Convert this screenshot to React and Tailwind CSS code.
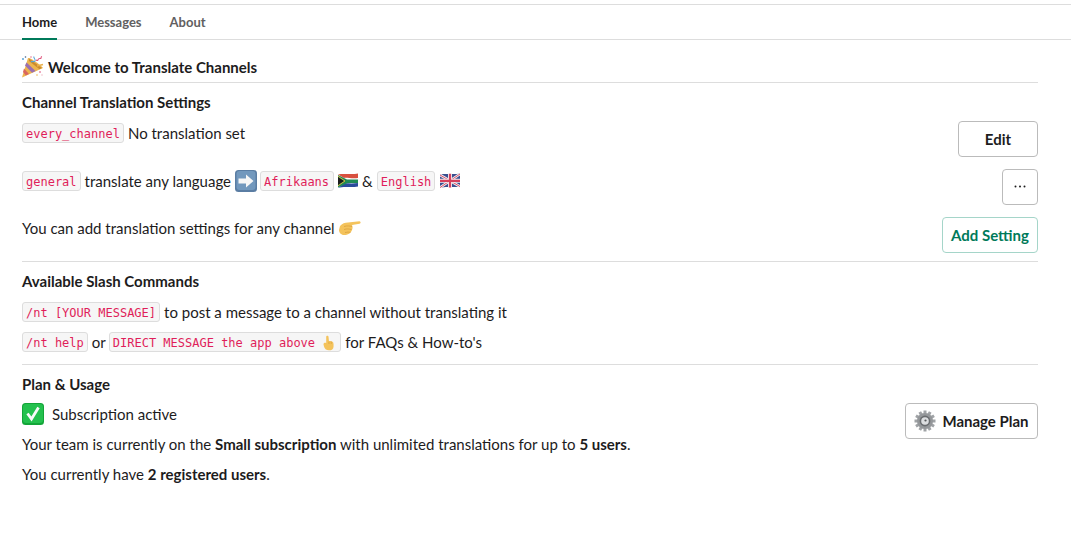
import React from "react";

const Code = ({ className = "", children }) => (
  <code className={`inline-flex items-center h-[20px] px-[3px] pt-px border border-[#dddddd] rounded-[3px] bg-[#f6f6f6] text-[#e01e5a] text-[12px] font-['DejaVu_Sans_Mono',monospace] ${className}`}>
    {children}
  </code>
);

const Party = () => (
  <svg width="22" height="22" viewBox="0 0 22 22" className="shrink-0">
    <path d="M6 2 C8 1 20 10 21 12 L0 21.5 Z" fill="#edb54e" />
    <path d="M4.5 6.5 L13.5 15 L10 16.7 L3 9.5 Z" fill="#9a6fb0" />
    <path d="M2 12.5 L7 18 L3.8 19.6 L1 16 Z" fill="#d9675f" />
    <path d="M7 2.5 L20 12 L17.5 13.2 L7 5 Z" fill="#c98a2e" />
    <path d="M9 6 C11 4 12 7 13 5 C14 3 11 2 12 0.5" stroke="#5aa5d8" strokeWidth="1.1" fill="none" />
    <path d="M14 4 C17 6 15 2 18 2.5 C20 3 18 1 20 0.5" stroke="#e0567e" strokeWidth="1.1" fill="none" />
    <path d="M15 10 L21 8.5" stroke="#e8b04a" strokeWidth="1.4" />
    <circle cx="1" cy="3" r="1" fill="#5aa5d8" />
    <circle cx="3.5" cy="1" r="0.8" fill="#3c5f8a" />
    <circle cx="18" cy="16" r="1" fill="#e88ca8" />
    <circle cx="20" cy="19" r="0.8" fill="#f0c0c8" />
    <circle cx="15" cy="19" r="0.8" fill="#edb54e" />
    <circle cx="9" cy="1" r="0.7" fill="#e0567e" />
  </svg>
);

const ArrowRight = () => (
  <svg width="22" height="22" viewBox="0 0 22 22" className="shrink-0">
    <rect x="0" y="0" width="22" height="22" rx="3.5" fill="#5a7da3" />
    <rect x="1.5" y="1" width="19" height="19" rx="3" fill="#7298bd" />
    <path d="M3.5 8.5 H11 V4.5 L18.5 11 L11 17.5 V13.5 H3.5 Z" fill="#f6f6f6" />
  </svg>
);

const FlagZA = () => (
  <svg width="20" height="15" viewBox="0 0 20 15" className="shrink-0 mb-[2px]">
    <path d="M0 1.5 C6 0 13 2 20 0.5 V13.5 C13 15 6 13 0 15 Z" fill="#fff" />
    <path d="M0 1.5 C6 0 13 2 20 0.5 V5 C14 6 8 4 6 5 Z" fill="#d8503f" />
    <path d="M0 15 C6 13 13 15 20 13.5 V10 C14 11 8 10 6 10.5 Z" fill="#2a4b9b" />
    <path d="M0 2 L9 6.5 H20 V10 H9.5 L0 14.5 Z" fill="#1f8a55" />
    <path d="M0 4 L6 8 L0 12 Z" fill="#1b1b1b" />
    <path d="M0 3.2 L7 8 L0 12.8" stroke="#e8b83a" strokeWidth="0.9" fill="none" />
  </svg>
);

const FlagUK = () => (
  <svg width="20" height="15" viewBox="0 0 20 15" className="shrink-0 mb-[2px] ml-[1px]">
    <path d="M0 1.5 C6 0 13 2 20 0.5 V13.5 C13 15 6 13 0 15 Z" fill="#3b4f8f" />
    <path d="M0 2 L20 13.5 M20 1 L0 14.5" stroke="#f2eef0" strokeWidth="2.6" />
    <path d="M0 2 L20 13.5 M20 1 L0 14.5" stroke="#d8506a" strokeWidth="1" />
    <path d="M10 0.8 V14.5 M0 7.8 H20" stroke="#f2eef0" strokeWidth="4" />
    <path d="M10 0.8 V14.5 M0 7.8 H20" stroke="#d63f5c" strokeWidth="2.2" />
  </svg>
);

const PointRight = () => (
  <svg width="22" height="16" viewBox="0 0 22 16" className="shrink-0">
    <path d="M1 6 C3 3.5 6 2.5 9 2.5 L20.5 1.2 C22 1.2 22 3.6 20.5 3.8 L13 5 C14 7 13.5 9 13 10 C12 13 9 15 5 15 C2 15 0 12.5 0 10 Z" fill="#f4c35c" />
    <path d="M5 6.5 C8 5.5 11 6 13 6.5 M5 9.5 C8 8.5 10 9 12.5 9.5 M6 12.5 C8 12 10 12 11.5 12.3" stroke="#d9a03c" strokeWidth="0.8" fill="none" />
  </svg>
);

const PointUp = () => (
  <svg width="11" height="16" viewBox="0 0 12 16" className="shrink-0 ml-[1px] mr-[3px]">
    <path d="M3.5 1.2 C3.5 -0.3 6 -0.3 6 1.2 L6.5 6 C9 5.5 11.5 6.5 11.5 9 V12 C11.5 14.5 9.5 16 6.5 16 C3.5 16 1.5 14 1 11.5 L0.5 9 C1 7.5 2.5 7.5 3.5 8 Z" fill="#f4c35c" />
    <path d="M6.5 6.5 V9 M9 6.5 V9" stroke="#d9a03c" strokeWidth="0.8" />
  </svg>
);

const CheckBox = () => (
  <svg width="22" height="22" viewBox="0 0 22 22" className="shrink-0">
    <rect width="22" height="22" rx="3.5" fill="#13a538" />
    <rect x="1" y="1" width="20" height="19" rx="3" fill="#24c14e" />
    <path d="M5.5 10.5 L9.5 16 L16.5 4.5" stroke="#fafafa" strokeWidth="2.8" fill="none" />
  </svg>
);

const teeth = [0, 30, 60, 90, 120, 150, 180, 210, 240, 270, 300, 330];

const Gear = () => (
  <svg width="22" height="22" viewBox="0 0 22 22" className="shrink-0">
    {teeth.map((a) => (
      <rect key={a} x="9.5" y="0.5" width="3" height="5" fill="#a0a3a6" transform={`rotate(${a} 11 11)`} />
    ))}
    <circle cx="11" cy="11" r="8" fill="#94979a" />
    <circle cx="11" cy="11" r="5.4" fill="#6a6d70" />
    <circle cx="11" cy="11" r="3.8" fill="#dcdee0" />
    <circle cx="11.5" cy="10.5" r="1.1" fill="#55585b" />
  </svg>
);

const Button = ({ className, children }) => (
  <button className={`h-[36px] shrink-0 rounded-[4px] border bg-white text-[15px] font-bold flex items-center justify-center ${className}`}>
    {children}
  </button>
);

const Divider = ({ className }) => <div className={`h-px bg-[#dddddd] ${className}`} />;

const Heading = ({ className, children }) => (
  <h2 className={`text-[15px] leading-[20px] font-bold text-[#1d1c1d] ${className}`}>{children}</h2>
);

const Line = ({ className, children }) => (
  <div className={`flex items-center h-[22px] text-[15px] text-[#1d1c1d] whitespace-pre ${className}`}>{children}</div>
);

export default function App() {
  return (
    <div className="w-[1071px] h-[542px] bg-white overflow-hidden pt-[4px] font-['Lato',sans-serif]">
      <div className="h-[34px] border-t border-b border-[#dddddd] box-content flex gap-[28px] px-[22px] text-[13px] font-bold text-[#616061]">
        <div className="h-[35px] pt-[3px] flex items-center text-[#1d1c1d] border-b-2 border-[#007a5a]">Home</div>
        <div className="h-[35px] pt-[3px] flex items-center border-b-2 border-transparent">Messages</div>
        <div className="h-[35px] pt-[3px] flex items-center border-b-2 border-transparent">About</div>
      </div>

      <div className="w-[1016px] ml-[22px]">
        <div className="flex items-center gap-[4px] h-[22px] mt-[16px] text-[15px] font-bold text-[#1d1c1d]">
          <Party />
          Welcome to Translate Channels
        </div>
        <Divider className="mt-[4px]" />

        <Heading className="mt-[9px]">Channel Translation Settings</Heading>

        <div className="flex justify-between mt-[10px]">
          <Line className="gap-[4px]">
            <Code>every_channel</Code>No translation set
          </Line>
          <Button className="w-[80px] mt-[-1px] border-[#bbbbbb] text-[#1d1c1d]">Edit</Button>
        </div>

        <div className="flex justify-between mt-[12px]">
          <Line className="gap-[4px] mt-[1px]">
            <Code>general</Code>translate any language
            <ArrowRight />
            <Code className="ml-[-1px] pr-[4px]">Afrikaans</Code>
            <FlagZA />
            <span>&amp;</span>
            <Code>English</Code>
            <FlagUK />
          </Line>
          <Button className="w-[36px] border-[#bbbbbb] text-[#1d1c1d]">
            <svg width="12" height="3" viewBox="0 0 12 3" className="mb-[2px]">
              <circle cx="1.5" cy="1.5" r="1" fill="#1d1c1d" />
              <circle cx="6" cy="1.5" r="1" fill="#1d1c1d" />
              <circle cx="10.5" cy="1.5" r="1" fill="#1d1c1d" />
            </svg>
          </Button>
        </div>

        <div className="flex justify-between mt-[12px]">
          <Line className="gap-[4px]">
            You can add translation settings for any channel
            <PointRight />
          </Line>
          <Button className="w-[96px] border-[#a5d5c9] text-[#007a5a]">Add Setting</Button>
        </div>

        <Divider className="mt-[8px]" />

        <Heading className="mt-[9px]">Available Slash Commands</Heading>

        <Line className="gap-[4px] mt-[10px]">
          <Code>/nt [YOUR MESSAGE]</Code>to post a message to a channel without translating it
        </Line>
        <Line className="gap-[4px] mt-[8px]">
          <Code>/nt help</Code>or<Code className="ml-[-1px]">DIRECT MESSAGE the app above&nbsp;<PointUp /></Code>for FAQs &amp; How-to's
        </Line>

        <Divider className="mt-[11px]" />

        <Heading className="mt-[9px]">Plan &amp; Usage</Heading>

        <div className="flex justify-between mt-[9px]">
          <div>
            <Line className="gap-[8px]">
              <CheckBox />
              Subscription active
            </Line>
            <Line className="mt-[8px]">
              Your team is currently on the <b>Small subscription</b> with unlimited translations for up to <b>5 users</b>.
            </Line>
            <Line className="mt-[8px]">
              You currently have <b>2 registered users</b>.
            </Line>
          </div>
          <Button className="w-[133px] gap-[6px] border-[#bbbbbb] text-[#1d1c1d]">
            <Gear />
            Manage Plan
          </Button>
        </div>
      </div>
    </div>
  );
}
